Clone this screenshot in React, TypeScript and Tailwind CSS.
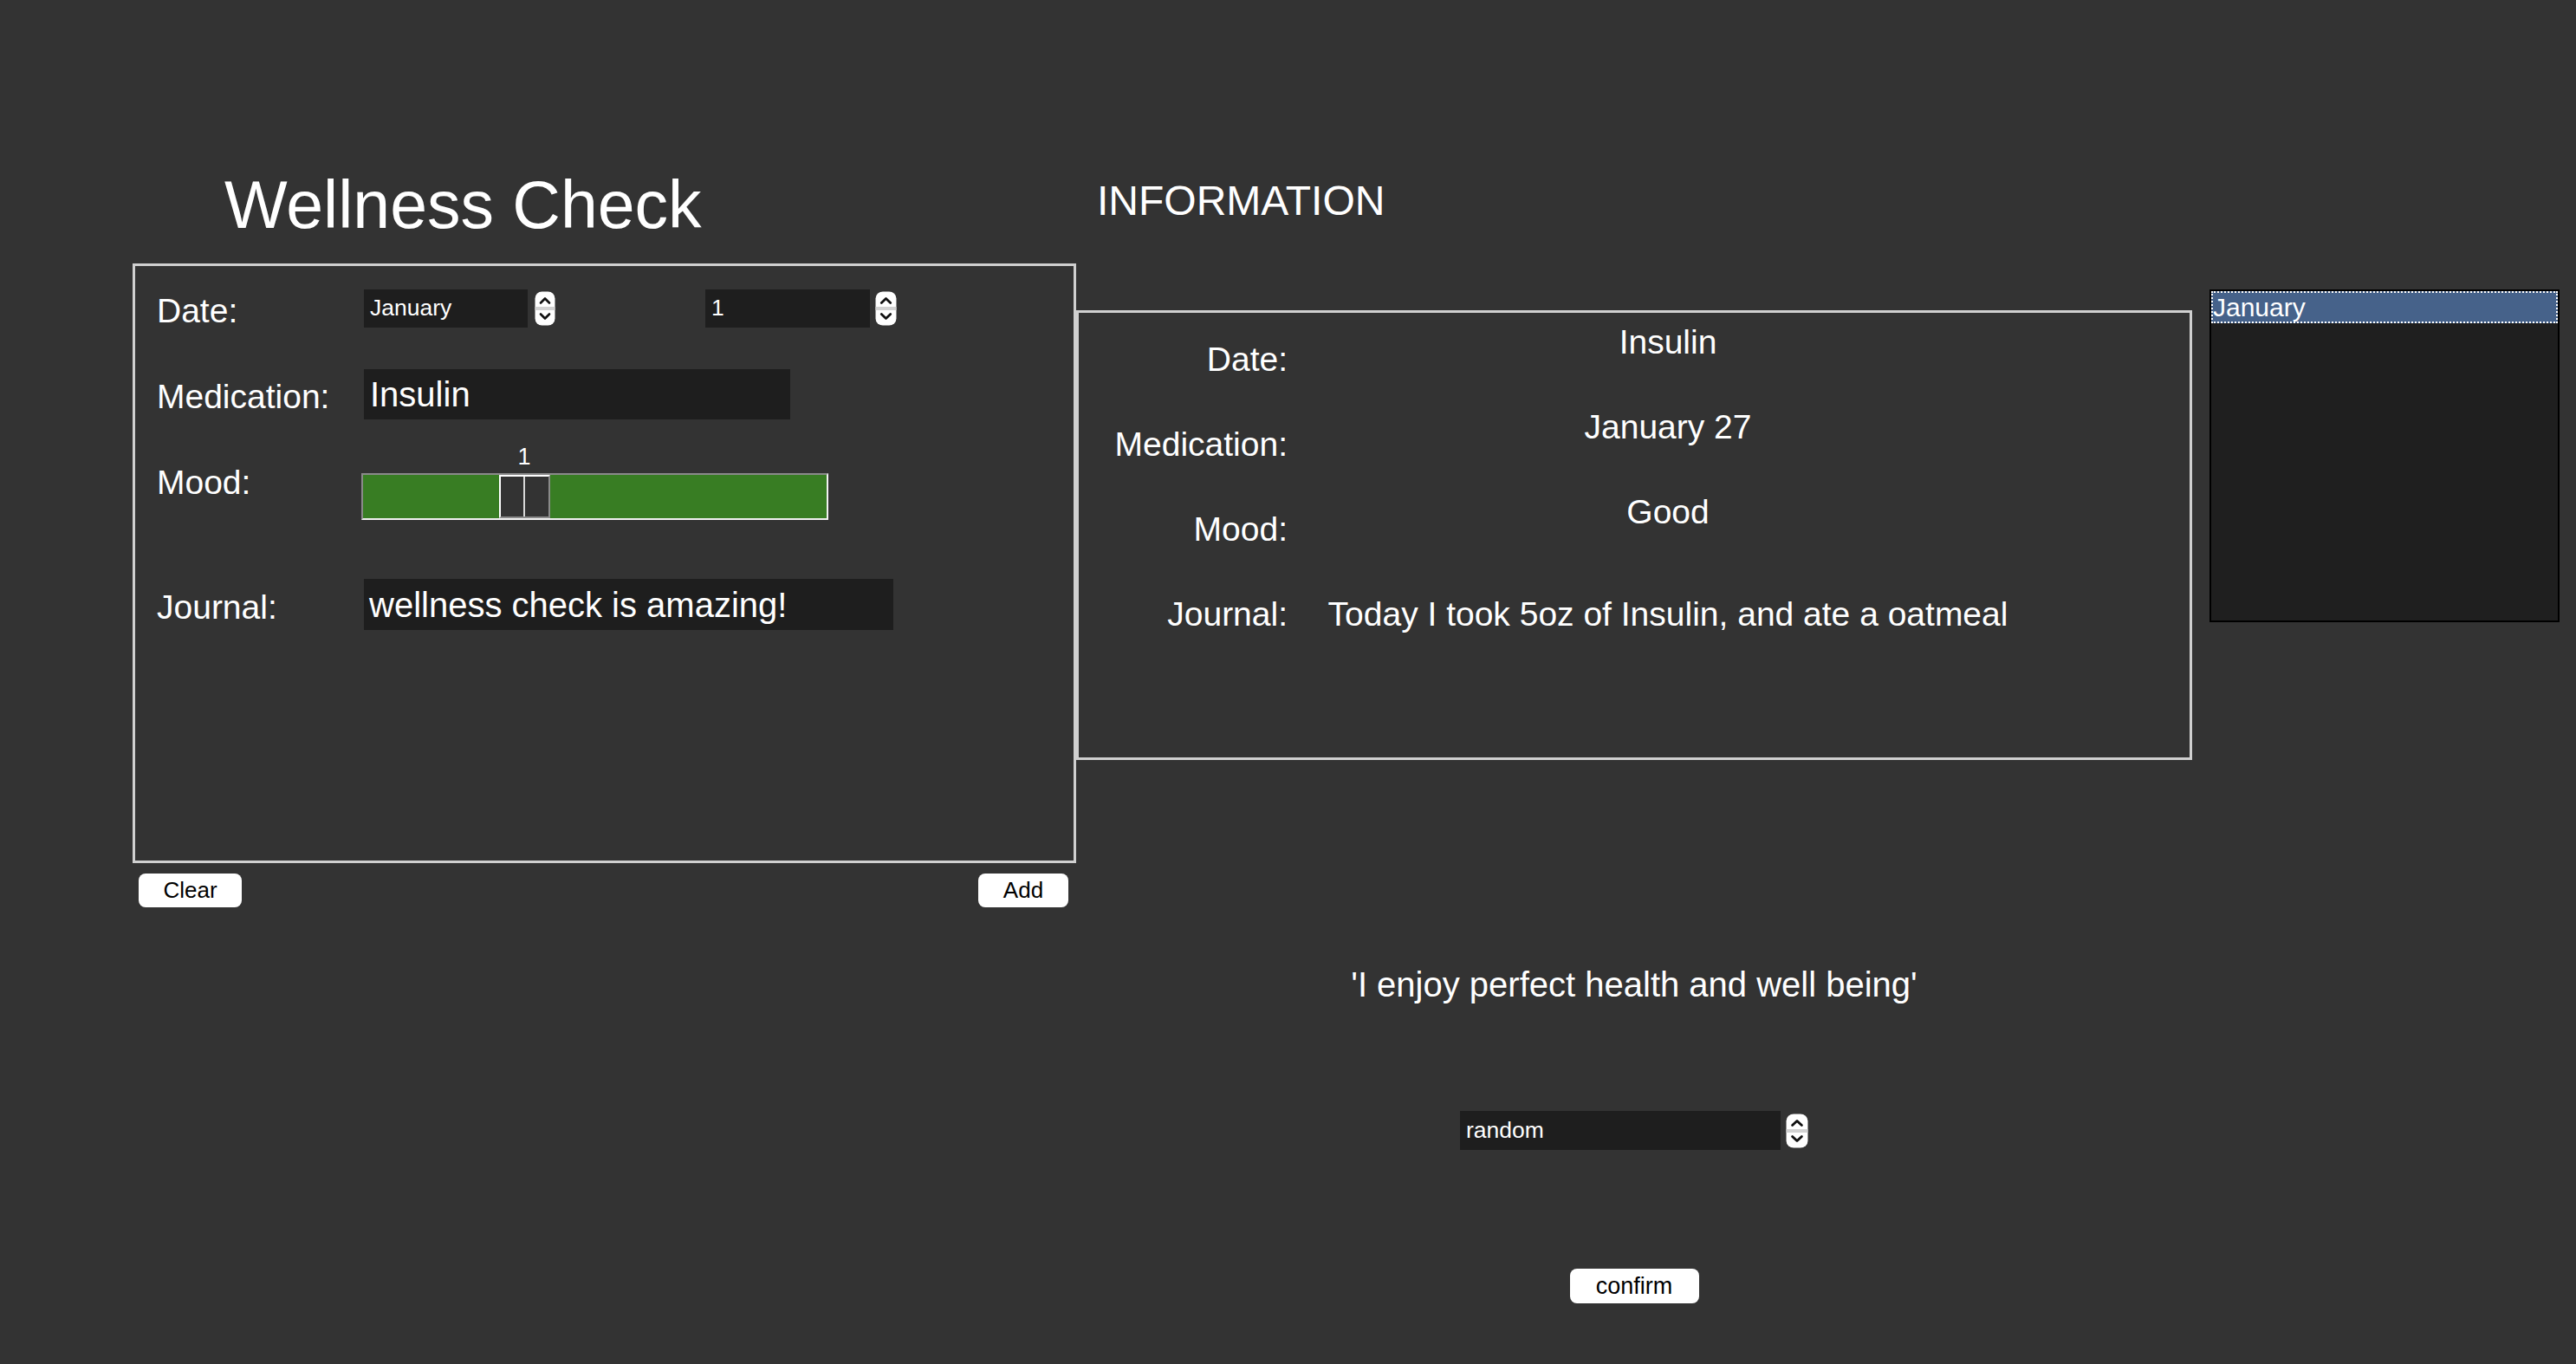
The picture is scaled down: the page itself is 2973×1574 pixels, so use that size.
import React from "react";

function SpinArrows({ w = 24, h = 40 }: { w?: number; h?: number }) {
  return (
    <svg width={w} height={h} viewBox="0 0 24 40" preserveAspectRatio="none" className="shrink-0">
      <rect x="0.5" y="0.5" width="23" height="39" rx="8" fill="#ffffff" />
      <rect x="0.5" y="18" width="23" height="4" fill="#d2d2d2" />
      <path d="M7 13.5 L12 8.5 L17 13.5" stroke="#111" strokeWidth="2.6" fill="none" strokeLinecap="round" strokeLinejoin="round" />
      <path d="M7 26.5 L12 31.5 L17 26.5" stroke="#111" strokeWidth="2.6" fill="none" strokeLinecap="round" strokeLinejoin="round" />
    </svg>
  );
}

function InfoRow({ label, value, center = false }: { label: string; value: string; center?: boolean }) {
  return (
    <div className="flex h-[98px]">
      <div className="w-[241px] text-right self-center leading-[58px] text-[39px] whitespace-nowrap">{label}</div>
      <div className={`w-[878px] text-center leading-[58px] text-[39px] whitespace-nowrap ${center ? "self-center" : "self-start"}`}>{value}</div>
    </div>
  );
}

export default function App() {
  return (
    <div className="w-[2973px] h-[1574px] bg-[#333333] text-white flex items-start overflow-hidden font-['Liberation_Sans',Arial,sans-serif]">
      {/* Left column */}
      <div className="flex flex-col w-[1089px] ml-[153px] shrink-0">
        <div className="mt-[191px] h-[90px] leading-[90px] text-[77px] pl-[106px] whitespace-nowrap">Wellness Check</div>
        <div className="mt-[23px] h-[692px] border-[3px] border-[#d0d0d0] flex flex-col pl-[25px]">
          {/* Date */}
          <div className="mt-[23px] h-[52px] flex items-center">
            <div className="w-[239px] pt-[6px] text-[39px] leading-[48px]">Date:</div>
            <div className="w-[189px] h-[44px] bg-[#1e1e1e] text-[26.5px] pl-[7px] flex items-center">January</div>
            <div className="ml-[8px] flex items-center"><SpinArrows w={24} h={40} /></div>
            <div className="ml-[173px] w-[190px] h-[44px] bg-[#1e1e1e] text-[26.5px] pl-[7px] flex items-center">1</div>
            <div className="ml-[6px] flex items-center"><SpinArrows w={25} h={40} /></div>
          </div>
          {/* Medication */}
          <div className="mt-[40px] h-[66px] flex items-center">
            <div className="w-[239px] pt-[6px] text-[39px] leading-[48px] whitespace-nowrap">Medication:</div>
            <div className="w-[492px] h-[58px] bg-[#1e1e1e] text-[40px] pl-[7px] flex items-center">Insulin</div>
          </div>
          {/* Mood */}
          <div className="mt-[20px] h-[94px] flex items-start">
            <div className="w-[239px] mt-[25px] text-[39px] leading-[48px]">Mood:</div>
            <div className="flex flex-col -ml-[3px]">
              <div className="mt-[4px] h-[30px] leading-[30px] text-[27px] w-[40px] ml-[168px] text-center">1</div>
              <div className="mt-[4px] relative w-[539px] h-[54px] bg-[#387d23] border-2 border-t-[#8a8a8a] border-l-[#8a8a8a] border-b-[#f2f2f2] border-r-[#f2f2f2]">
                <div className="absolute left-[157px] top-0 w-[59px] h-[50px] bg-[#333333] border-2 border-t-white border-l-white border-b-[#8a8a8a] border-r-[#8a8a8a] flex">
                  <div className="w-1/2 h-full border-r-2 border-r-[#d8d8d8]" />
                  <div className="w-1/2 h-full" />
                </div>
              </div>
            </div>
          </div>
          {/* Journal */}
          <div className="mt-[62px] h-[67px] flex items-center">
            <div className="w-[239px] pt-[6px] text-[39px] leading-[48px]">Journal:</div>
            <div className="w-[611px] h-[59px] bg-[#1e1e1e] text-[40px] pl-[6px] flex items-center whitespace-nowrap">wellness check is amazing!</div>
          </div>
        </div>
        <div className="mt-[12px] flex justify-between pl-[7px] pr-[9px]">
          <button className="w-[119px] h-[39px] rounded-[8px] bg-white text-black text-[26px] leading-[39px]">Clear</button>
          <button className="w-[104px] h-[39px] rounded-[8px] bg-white text-black text-[26px] leading-[39px]">Add</button>
        </div>
      </div>

      {/* Middle column */}
      <div className="flex flex-col w-[1288px] shrink-0">
        <div className="mt-[204px] h-[56px] leading-[56px] text-[48px] pl-[24px] whitespace-nowrap">INFORMATION</div>
        <div className="mt-[98px] h-[519px] border-[3px] border-[#d0d0d0] pt-[5px] flex flex-col">
          <InfoRow label="Date:" value="Insulin" />
          <InfoRow label="Medication:" value="January 27" />
          <InfoRow label="Mood:" value="Good" />
          <InfoRow label="Journal:" value="Today I took 5oz of Insulin, and ate a oatmeal" center />
        </div>
        <div className="mt-[235px] text-center text-[40px] leading-[48px] whitespace-nowrap">'I enjoy perfect health and well being'</div>
        <div className="mt-[122px] h-[45px] flex justify-center items-center">
          <div className="w-[370px] h-[45px] bg-[#1e1e1e] text-[26.5px] pl-[7px] flex items-center">random</div>
          <div className="ml-[6px] flex items-center"><SpinArrows w={26} h={40} /></div>
        </div>
        <div className="mt-[137px] flex justify-center">
          <button className="w-[149px] h-[40px] rounded-[8px] bg-white text-black text-[27px] leading-[40px]">confirm</button>
        </div>
      </div>

      {/* Listbox */}
      <div className="ml-[20px] mt-[334px] w-[404px] h-[384px] border-2 border-black bg-[#1f1f1f] shrink-0">
        <div className="h-[37px] bg-[#46628a] border-2 border-dotted border-white text-[30px] leading-[33px] whitespace-nowrap">January</div>
      </div>
    </div>
  );
}
